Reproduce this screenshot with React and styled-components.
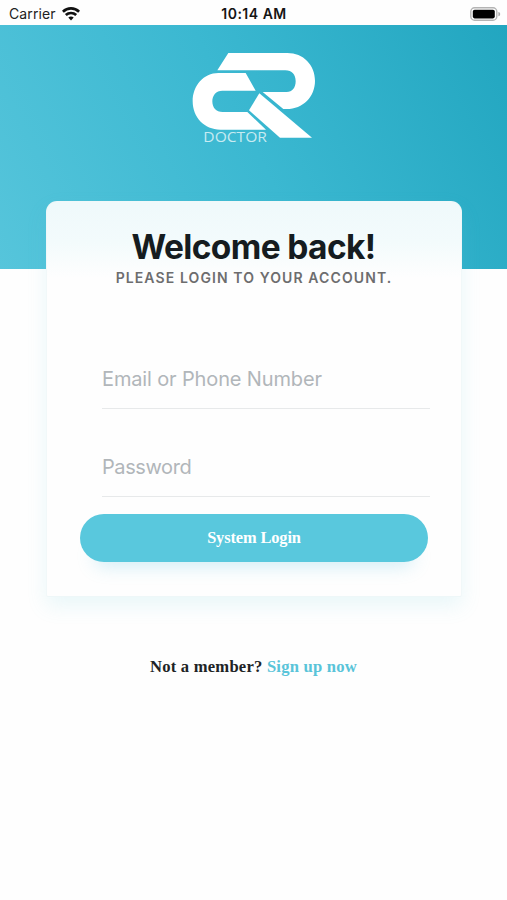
import React from "react";
import styled, { createGlobalStyle } from "styled-components";

const GlobalStyle = createGlobalStyle`
  * { box-sizing: border-box; }
  body { margin: 0; background: #fefefe; }
`;

const Screen = styled.main`
  width: 507px;
  height: 900px;
  overflow: hidden;
  display: flex;
  flex-direction: column;
  background: #fefefe;
  font-family: Inter, sans-serif;
`;

const StatusBar = styled.header`
  flex: none;
  height: 25px;
  padding: 2px 6px 0 9px;
  display: grid;
  grid-template-columns: 1fr auto 1fr;
  align-items: center;
  color: #222;
  font-size: 14px;
  line-height: 23px;
`;

const Carrier = styled.div`
  display: flex;
  align-items: center;
  gap: 6px;
  letter-spacing: 0.1px;
`;

const Clock = styled.time`
  margin-right: 2px;
  color: #151515;
  font-weight: 600;
  letter-spacing: 0.5px;
`;

const Battery = styled.div`
  display: flex;
  justify-content: flex-end;
`;

const Hero = styled.section`
  flex: none;
  height: 244px;
  padding-top: 27px;
  display: flex;
  justify-content: center;
  align-items: flex-start;
  background: linear-gradient(63deg, #56c5db 0%, #3bb8d1 50%, #22a6c0 100%);
`;

const Card = styled.section`
  flex: none;
  width: 416px;
  height: 396px;
  margin: -68px 0 0 46px;
  padding: 25px 33px 0;
  display: flex;
  flex-direction: column;
  border: 1px solid rgba(238, 246, 248, 0.8);
  border-radius: 11px 11px 2px 2px;
  background: linear-gradient(#eff9fb 0, #f3fbfc 40px, #fefefe 76px);
  box-shadow: 0 9px 20px rgba(90, 200, 220, 0.13);
`;

const Title = styled.h1`
  margin: 0 1px 1px 0;
  text-align: center;
  color: #151c20;
  font-size: 33.5px;
  line-height: 40px;
  font-weight: 700;
  letter-spacing: -0.64px;
`;

const Subtitle = styled.p`
  margin: 0 0 70px;
  text-align: center;
  color: #6d6d6e;
  font-size: 14px;
  line-height: 20px;
  font-weight: 600;
  letter-spacing: 1.1px;
`;

const Field = styled.input`
  display: block;
  flex: none;
  width: 328px;
  height: 51px;
  margin: 0 0 ${(p) => p.$gap}px 22px;
  padding: 0 0 8px;
  border: 0;
  border-bottom: 1px solid #e7e9ea;
  outline: 0;
  background: transparent;
  font-family: Inter, sans-serif;
  font-size: 20px;
  letter-spacing: ${(p) => p.$tracking}px;
  &::placeholder { color: #b1b6ba; opacity: 1; }
`;

const LoginButton = styled.button`
  flex: none;
  height: 48px;
  padding: 0;
  border: 0;
  border-radius: 24px;
  background: #59c8dd;
  color: #fff;
  font: bold 16.4px/48px "Liberation Serif", serif;
  letter-spacing: -0.12px;
  box-shadow: 0 18px 18px -14px rgba(89, 190, 221, 0.28);
`;

const Signup = styled.p`
  margin: 60px 0 0;
  text-align: center;
  color: #202325;
  font: bold 16.6px/20px "Liberation Serif", serif;
  letter-spacing: 0.22px;
`;

const SignupLink = styled.a`
  color: #59c4d9;
  text-decoration: none;
`;

function WifiIcon() {
  return (
    <svg width="18" height="14" viewBox="0 0 18 14" fill="none" stroke="#111" strokeWidth="2.7">
      <path d="M.9 4.7C5.5.3 12.5.3 17.1 4.7M3.8 8.1c3-2.8 7.4-2.8 10.4 0" />
      <path d="M6.3 10.5c1.6-1.4 3.8-1.4 5.4 0L9 13.4Z" fill="#111" stroke="none" />
    </svg>
  );
}

function BatteryIcon() {
  return (
    <svg width="31" height="14" viewBox="0 0 31 14">
      <rect x=".8" y=".8" width="26" height="12.4" rx="3.8" fill="#fff" stroke="#b4b4b4" strokeWidth="1.4" />
      <rect x="2.8" y="2.8" width="22" height="8.6" rx="1.8" fill="#000" />
      <path d="M28.4 5c2.4.5 2.4 3.7 0 4.2Z" fill="#aaa" />
    </svg>
  );
}

function Logo() {
  return (
    <svg width="124" height="98" viewBox="66 36 372 294" fill="#fff" role="img" aria-label="CR Doctor">
      <path d="M175 39H352C400 39 435 75 435 122C435 170 399 207 350 207H340L278 156H350C367 156 377 143 377 124C377 104 366 91 346 91H142Z" />
      <path d="M145 99H227L257 152H157C138 152 127 166 127 184C127 203 138 216 158 216H232L288 269H151C103 269 68 232 68 184C68 137 101 99 145 99Z" />
      <path d="M268 160L426 293H330L237 211Z" />
      <text x="100" y="306" fontFamily="Open Sans, sans-serif" fontSize="42" fontWeight="400" textLength="191" lengthAdjust="spacingAndGlyphs" fillOpacity=".72">DOCTOR</text>
    </svg>
  );
}

export default function App() {
  return (
    <Screen>
      <GlobalStyle />
      <StatusBar>
        <Carrier>Carrier <WifiIcon /></Carrier>
        <Clock>10:14 AM</Clock>
        <Battery><BatteryIcon /></Battery>
      </StatusBar>
      <Hero><Logo /></Hero>
      <Card>
        <Title>Welcome back!</Title>
        <Subtitle>PLEASE LOGIN TO YOUR ACCOUNT.</Subtitle>
        <Field $gap={37} $tracking={-0.14} placeholder="Email or Phone Number" />
        <Field $gap={17} $tracking={-0.4} type="password" placeholder="Password" />
        <LoginButton type="button">System Login</LoginButton>
      </Card>
      <Signup>Not a member? <SignupLink>Sign up now</SignupLink></Signup>
    </Screen>
  );
}
